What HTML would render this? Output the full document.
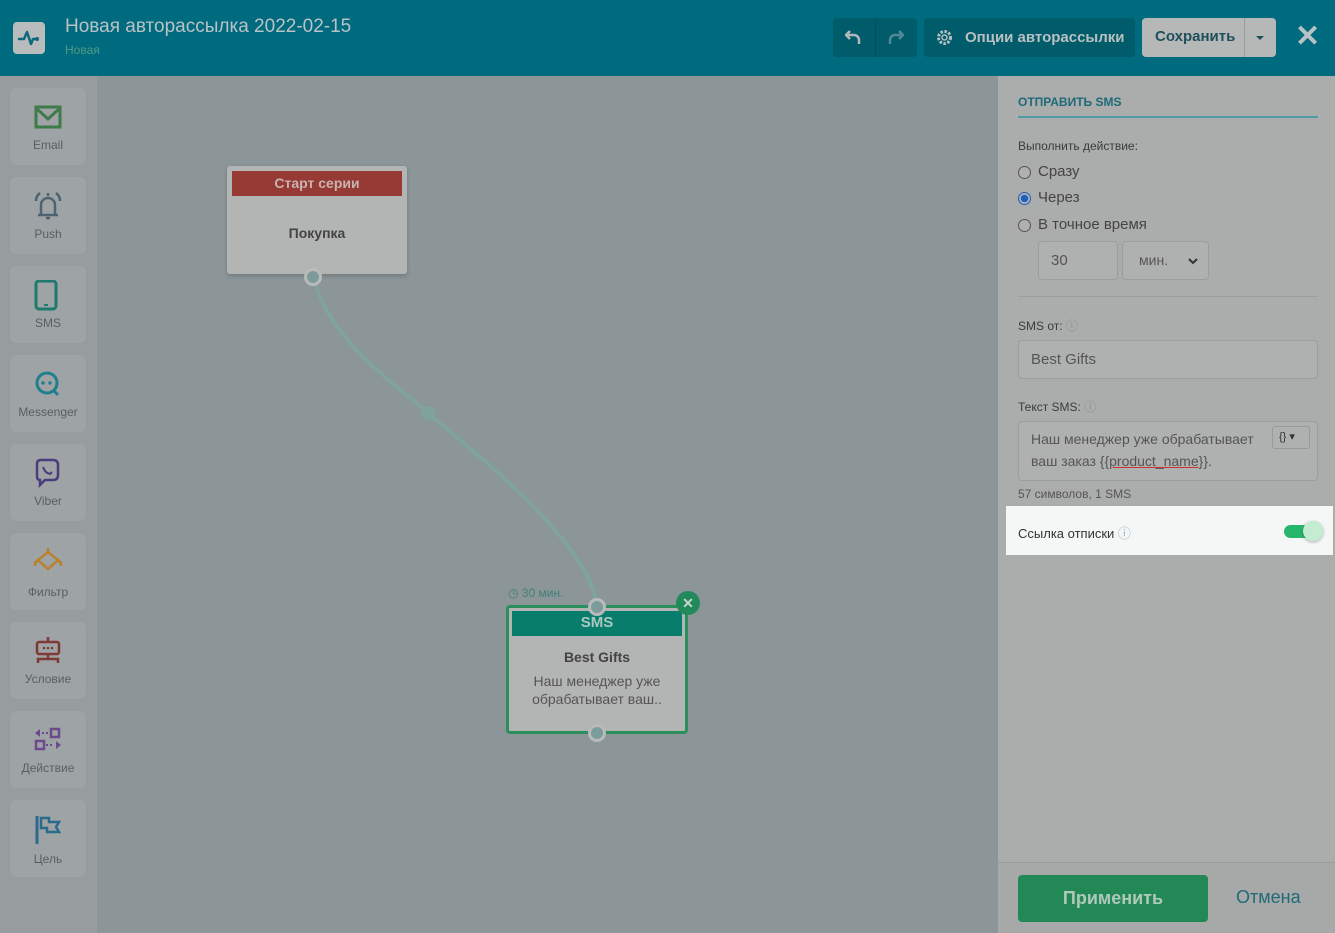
<!DOCTYPE html>
<html><head><meta charset="utf-8"><style>
*{box-sizing:border-box;margin:0;padding:0}
body{width:1335px;height:933px;overflow:hidden;font-family:"Liberation Sans",sans-serif;background:#8c9699;position:relative}
.hdr{position:absolute;left:0;top:0;width:1335px;height:76px;background:#006a7e}
.abs{position:absolute}
.side{position:absolute;left:0;top:76px;width:98px;height:857px;background:#979c9f;border-right:1px solid #8f9496}
.card{position:absolute;left:10px;width:76px;height:77px;background:#9ea3a5;border-radius:6px;text-align:center;font-size:12px;color:#5a5e60}
.card svg{position:absolute;left:23px;top:14px}
.card span{position:absolute;left:0;right:0;top:50px}
.panel{position:absolute;left:998px;top:76px;width:337px;height:857px;background:#abacac}
.lbl{position:absolute;font-size:13px;color:#3a3c3d}
.inp{position:absolute;border:1px solid #9c9e9e;border-radius:4px;background:#afb0b0;font-size:15px;color:#555;padding-left:12px}
.radio{position:absolute;left:1018px;width:13px;height:13px;border:1px solid #555;border-radius:50%;background:#b0b0b0}
.rt{position:absolute;left:1038px;font-size:15px;color:#444}
</style></head><body>
<div class="hdr"></div>
<div class="abs" style="left:13px;top:22px;width:32px;height:32px;background:#b9bcbd;border-radius:4px">
<svg width="32" height="32" viewBox="0 0 32 32"><path d="M6 17h5l3-7 4 12 2-5h4" fill="none" stroke="#0b6a7c" stroke-width="2.5" stroke-linecap="round" stroke-linejoin="round"/><circle cx="24" cy="17" r="2" fill="#0b6a7c"/></svg></div>
<div class="abs" style="left:65px;top:16px;font-size:19px;color:#b9c2c5">Новая авторассылка 2022-02-15</div>
<div class="abs" style="left:65px;top:43px;font-size:12px;color:#4f9a85">Новая</div>
<div class="abs" style="left:833px;top:18px;width:84px;height:39px;background:#005b6b;border-radius:4px"></div>
<div class="abs" style="left:875px;top:18px;width:1px;height:39px;background:#00505e"></div>
<svg class="abs" style="left:845px;top:28px" width="18" height="18"><path d="M5 3L1 7l4 4M1 7h8a5 5 0 0 1 5 5v4" fill="none" stroke="#b0b8ba" stroke-width="2.5"/></svg>
<svg class="abs" style="left:886px;top:28px" width="18" height="18"><path d="M13 3l4 4-4 4M17 7H9a5 5 0 0 0-5 5v4" fill="none" stroke="#4f8a95" stroke-width="2.5"/></svg>
<div class="abs" style="left:924px;top:18px;width:211px;height:39px;background:#005b6b;border-radius:4px;color:#b9c0c2;font-size:15px;font-weight:bold;line-height:39px;padding-left:41px">Опции авторассылки</div>
<svg class="abs" style="left:936px;top:29px" width="17" height="17"><circle cx="8.5" cy="8.5" r="6" fill="none" stroke="#b9c0c2" stroke-width="3" stroke-dasharray="2.5 1.5"/><circle cx="8.5" cy="8.5" r="2.5" fill="none" stroke="#b9c0c2" stroke-width="1.5"/></svg>
<div class="abs" style="left:1142px;top:18px;width:134px;height:39px;background:#b6b8b8;border-radius:4px"></div>
<div class="abs" style="left:1244px;top:18px;width:1px;height:39px;background:#9a9c9c"></div>
<div class="abs" style="left:1155px;top:28px;font-size:15px;font-weight:bold;color:#1f4f5a">Сохранить</div>
<div class="abs" style="left:1256px;top:36px;border-left:4px solid transparent;border-right:4px solid transparent;border-top:4px solid #1f4f5a"></div>
<div class="abs" style="left:1295px;top:19px;font-size:30px;color:#b9c2c5;font-weight:bold">✕</div>

<div class="side"></div>
<div class="card" style="top:88px"><svg width="30" height="30"><rect x="3" y="5" width="24" height="20" fill="none" stroke="#3f7a4a" stroke-width="3"/><path d="M3 6l12 11 12-11" fill="none" stroke="#3f7a4a" stroke-width="3"/></svg><span>Email</span></div>
<div class="card" style="top:177px"><svg width="30" height="32"><path d="M8 24V14a7 7 0 0 1 14 0v10zM5 24h20M13 27h4M3 10q0-5 4-8M27 10q0-5-4-8M15 2v3" fill="none" stroke="#4f6272" stroke-width="2.5"/></svg><span>Push</span></div>
<div class="card" style="top:266px"><svg width="30" height="32"><rect x="3" y="1" width="20" height="28" rx="3" fill="none" stroke="#1f7a6e" stroke-width="3"/><rect x="11" y="24" width="4" height="2" fill="#1f7a6e"/></svg><span>SMS</span></div>
<div class="card" style="top:355px"><svg width="30" height="30"><circle cx="14" cy="14" r="10" fill="none" stroke="#1f7f8e" stroke-width="3"/><path d="M20 21l5 5" stroke="#1f7f8e" stroke-width="3"/><circle cx="10" cy="14" r="1.7" fill="#1f7f8e"/><circle cx="17" cy="14" r="1.7" fill="#1f7f8e"/></svg><span>Messenger</span></div>
<div class="card" style="top:444px"><svg width="30" height="32"><path d="M4 6q0-4 4-4h12q5 0 5 5v10q0 5-5 5h-8l-5 5v-5q-3 0-3-4z" fill="none" stroke="#4a3d7f" stroke-width="2.5"/><path d="M10 9q2 6 7 7l2-2" fill="none" stroke="#4a3d7f" stroke-width="2"/></svg><span>Viber</span></div>
<div class="card" style="top:533px"><svg width="30" height="30"><path d="M15 1v4L5 13l10 9 10-9-10-8M5 13l-3 3v3M25 13l3 3v3" fill="none" stroke="#b8822b" stroke-width="2.5"/></svg><span style="top:52px">Фильтр</span></div>
<div class="card" style="top:622px"><svg width="30" height="32"><rect x="4" y="6" width="22" height="12" rx="2" fill="none" stroke="#7f3a36" stroke-width="2.5"/><path d="M15 1v5M15 18v5M5 27v-4h20v4" fill="none" stroke="#7f3a36" stroke-width="2.5"/><circle cx="11" cy="12" r="1.3" fill="#7f3a36"/><circle cx="15" cy="12" r="1.3" fill="#7f3a36"/><circle cx="19" cy="12" r="1.3" fill="#7f3a36"/></svg><span>Условие</span></div>
<div class="card" style="top:711px"><svg width="30" height="30"><rect x="18" y="4" width="8" height="8" fill="none" stroke="#6d4a8c" stroke-width="2.5"/><rect x="3" y="16" width="8" height="8" fill="none" stroke="#6d4a8c" stroke-width="2.5"/><path d="M2 8l5-4v8zM28 20l-5-4v8z" fill="#6d4a8c"/><path d="M9 8h7M13 20h7" stroke="#6d4a8c" stroke-width="2" stroke-dasharray="2 2"/></svg><span>Действие</span></div>
<div class="card" style="top:800px"><svg width="30" height="32"><path d="M4 2v28" stroke="#2a6a8a" stroke-width="3"/><path d="M8 4h8v4h10l-3 5 3 5H14v-4H8z" fill="none" stroke="#2a6a8a" stroke-width="2.5"/></svg><span style="top:52px">Цель</span></div>

<svg class="abs" style="left:0;top:0" width="998" height="933"><path d="M313 277C330 340 390 380 428 413S590 540 597 607" fill="none" stroke="#7fa39f" stroke-width="4"/><circle cx="428" cy="413" r="7" fill="#7fa39f"/></svg>
<div class="abs" style="left:227px;top:166px;width:180px;height:108px;background:#b3b4b4;border-radius:3px;box-shadow:0 2px 5px rgba(0,0,0,.2)"></div>
<div class="abs" style="left:232px;top:171px;width:170px;height:25px;background:#953a34;color:#c9b3b0;font-size:14px;font-weight:bold;text-align:center;line-height:25px">Старт серии</div>
<div class="abs" style="left:227px;top:225px;width:180px;text-align:center;font-size:14px;font-weight:bold;color:#444">Покупка</div>
<div class="abs" style="left:304px;top:268px;width:18px;height:18px;border-radius:50%;background:#7c9c9c;border:3px solid #b9bbbb"></div>

<div class="abs" style="left:508px;top:586px;font-size:12px;color:#3f7f75">◷ 30 мин.</div>
<div class="abs" style="left:506px;top:605px;width:182px;height:129px;background:#b3b4b4;border:3px solid #2a8f5c;border-radius:4px"></div>
<div class="abs" style="left:512px;top:611px;width:170px;height:25px;background:#097d6b;color:#aac7c1;font-size:15px;font-weight:bold;text-align:center;line-height:24px">SMS</div>
<div class="abs" style="left:506px;top:649px;width:182px;text-align:center;font-size:14px;font-weight:bold;color:#444">Best Gifts</div>
<div class="abs" style="left:506px;top:672px;width:182px;text-align:center;font-size:14px;color:#555;line-height:18px">Наш менеджер уже<br>обрабатывает ваш..</div>
<div class="abs" style="left:588px;top:598px;width:18px;height:18px;border-radius:50%;background:#7c9c9c;border:3px solid #b9bbbb"></div>
<div class="abs" style="left:588px;top:724px;width:18px;height:18px;border-radius:50%;background:#7c9c9c;border:3px solid #b9bbbb"></div>
<div class="abs" style="left:676px;top:591px;width:24px;height:24px;border-radius:50%;background:#22895a;color:#c8d6cf;font-size:14px;text-align:center;line-height:24px;font-weight:bold">✕</div>

<div class="panel"></div>
<div class="abs" style="left:1018px;top:95px;font-size:12px;color:#1f6a78;font-weight:bold">ОТПРАВИТЬ SMS</div>
<div class="abs" style="left:1018px;top:116px;width:300px;height:2px;background:#4f9aa3"></div>
<div class="lbl" style="left:1018px;top:139px;font-size:12px">Выполнить действие:</div>
<div class="radio" style="top:166px"></div><div class="rt" style="top:163px">Сразу</div>
<div class="radio" style="top:192px;border-color:#1e5fbf;background:radial-gradient(circle,#1e5fbf 45%,#b0b0b0 50%)"></div><div class="rt" style="top:189px">Через</div>
<div class="radio" style="top:219px"></div><div class="rt" style="top:216px">В точное время</div>
<div class="inp" style="left:1038px;top:241px;width:80px;height:39px;line-height:37px">30</div>
<div class="inp" style="left:1122px;top:241px;width:87px;height:39px;line-height:37px;font-size:14px;padding-left:16px">мин.<svg style="position:absolute;right:10px;top:15px" width="10" height="8"><path d="M1 2l4 4 4-4" fill="none" stroke="#333" stroke-width="2"/></svg></div>
<div class="abs" style="left:1018px;top:296px;width:300px;height:1px;background:#9c9e9e"></div>
<div class="lbl" style="left:1018px;top:317px;font-size:12px">SMS от: <span style="color:#7f9096">ⓘ</span></div>
<div class="inp" style="left:1018px;top:340px;width:300px;height:39px;line-height:37px">Best Gifts</div>
<div class="lbl" style="left:1018px;top:398px;font-size:12px">Текст SMS: <span style="color:#7f9096">ⓘ</span></div>
<div class="inp" style="left:1018px;top:421px;width:300px;height:60px;line-height:22px;padding-top:6px;font-size:14px">Наш менеджер уже обрабатывает<br>ваш заказ {{<u style="text-decoration-color:#c33">product_name</u>}}.</div>
<div class="abs" style="left:1272px;top:426px;width:38px;height:23px;border:1px solid #999;border-radius:3px;font-size:11px;color:#333;line-height:21px;padding-left:6px">{} ▾</div>
<div class="abs" style="left:1018px;top:487px;font-size:12px;color:#555">57 символов, 1 SMS</div>
<div class="abs" style="left:1006px;top:506px;width:327px;height:49px;background:#f5f6f6"></div>
<div class="abs" style="left:1018px;top:523px;font-size:13px;color:#333">Ссылка отписки <span style="color:#8fb4c0">ⓘ</span></div>
<div class="abs" style="left:1284px;top:525px;width:34px;height:13px;border-radius:7px;background:#27b66c"></div>
<div class="abs" style="left:1303px;top:521px;width:20px;height:20px;border-radius:50%;background:#c3ecd1;box-shadow:0 1px 3px rgba(0,0,0,.3)"></div>
<div class="abs" style="left:998px;top:862px;width:337px;height:71px;background:#a7a8a8;border-top:1px solid #9c9d9d"></div>
<div class="abs" style="left:1018px;top:875px;width:190px;height:47px;background:#228856;border-radius:4px;color:#afc9ba;font-size:18px;font-weight:bold;text-align:center;line-height:47px">Применить</div>
<div class="abs" style="left:1236px;top:887px;font-size:18px;color:#1f6a78">Отмена</div>
</body></html>
